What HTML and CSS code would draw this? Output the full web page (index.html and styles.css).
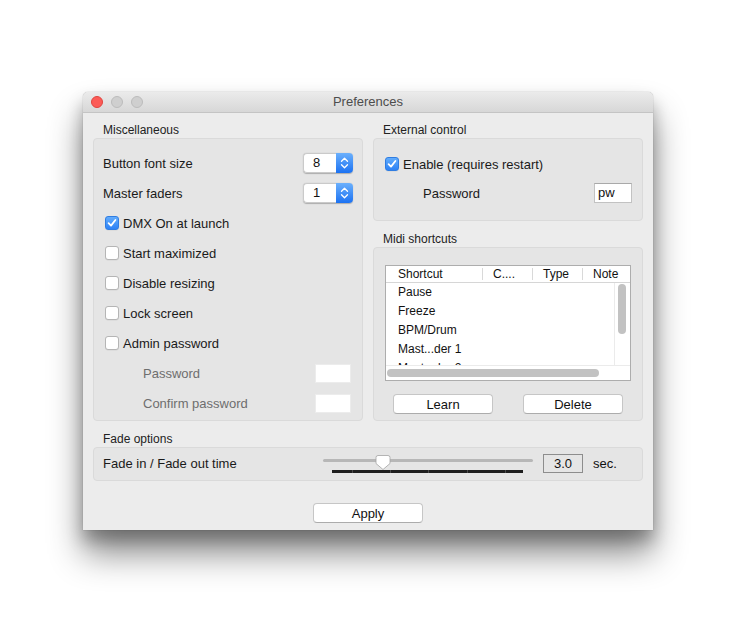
FILE: index.html
```html
<!DOCTYPE html>
<html>
<head>
<meta charset="utf-8">
<title>Preferences</title>
<link rel="stylesheet" href="styles.css">
</head>
<body>
<div class="stage">
  <div class="window">
    <div class="titlebar">
      <div class="lights"><span class="light red"></span><span class="light"></span><span class="light"></span></div>
      <div class="title">Preferences</div>
      <div></div>
    </div>
    <div class="content">
      <div class="columns">
        <div class="col">
          <section class="group">
            <div class="glabel">Miscellaneous</div>
            <div class="gbox misc">
              <div class="row"><span class="lbl">Button font size</span>
                <div class="spin"><span class="val">8</span><span class="arrows"><svg width="17" height="18" viewBox="0 0 17 18"><path d="M5.5 7.2 L8.5 4.2 L11.5 7.2 M5.5 10.8 L8.5 13.8 L11.5 10.8" fill="none" stroke="#fff" stroke-width="1.3" stroke-linecap="round" stroke-linejoin="round"/></svg></span></div>
              </div>
              <div class="row"><span class="lbl">Master faders</span>
                <div class="spin"><span class="val">1</span><span class="arrows"><svg width="17" height="18" viewBox="0 0 17 18"><path d="M5.5 7.2 L8.5 4.2 L11.5 7.2 M5.5 10.8 L8.5 13.8 L11.5 10.8" fill="none" stroke="#fff" stroke-width="1.3" stroke-linecap="round" stroke-linejoin="round"/></svg></span></div>
              </div>
              <div class="row"><span class="cb on"><svg width="12" height="12" viewBox="0 0 12 12"><path d="M2.6 6.2 L5 8.6 L9.4 3" fill="none" stroke="#fff" stroke-width="1.8" stroke-linecap="round" stroke-linejoin="round"/></svg></span><span class="lbl">DMX On at launch</span></div>
              <div class="row"><span class="cb"></span><span class="lbl">Start maximized</span></div>
              <div class="row"><span class="cb"></span><span class="lbl">Disable resizing</span></div>
              <div class="row"><span class="cb"></span><span class="lbl">Lock screen</span></div>
              <div class="row"><span class="cb"></span><span class="lbl">Admin password</span></div>
              <div class="row sub"><span class="lbl">Password</span><span class="field small"></span></div>
              <div class="row sub"><span class="lbl">Confirm password</span><span class="field small"></span></div>
            </div>
          </section>
        </div>
        <div class="col">
          <section class="group">
            <div class="glabel">External control</div>
            <div class="gbox ext">
              <div class="row"><span class="cb on"><svg width="12" height="12" viewBox="0 0 12 12"><path d="M2.6 6.2 L5 8.6 L9.4 3" fill="none" stroke="#fff" stroke-width="1.8" stroke-linecap="round" stroke-linejoin="round"/></svg></span><span class="lbl">Enable (requires restart)</span></div>
              <div class="row sub on"><span class="lbl">Password</span><span class="field pw">pw</span></div>
            </div>
          </section>
          <section class="group gap">
            <div class="glabel">Midi shortcuts</div>
            <div class="gbox midi">
              <div class="table">
                <div class="thead">
                  <span class="th c1">Shortcut</span>
                  <span class="th c2">C....</span>
                  <span class="th c3">Type</span>
                  <span class="th c4">Note</span>
                </div>
                <div class="tbody">
                  <div class="rows">
                    <div class="tr">Pause</div>
                    <div class="tr">Freeze</div>
                    <div class="tr">BPM/Drum</div>
                    <div class="tr">Mast...der 1</div>
                    <div class="tr">Mast...der 2</div>
                  </div>
                  <div class="vscroll"><div class="vthumb"></div></div>
                </div>
                <div class="hscroll"><div class="hthumb"></div></div>
              </div>
              <div class="buttons">
                <button class="btn">Learn</button>
                <button class="btn">Delete</button>
              </div>
            </div>
          </section>
        </div>
      </div>
      <section class="group gap">
        <div class="glabel">Fade options</div>
        <div class="gbox fade">
          <div class="row">
            <span class="flbl">Fade in / Fade out time</span>
            <div class="slider">
              <div class="track"></div>
              <div class="ticks"><span class="t1"></span><span class="t2"></span><span class="t2"></span><span class="t3"></span><span class="t2"></span><span class="t4"></span></div>
              <svg class="thumb" width="16" height="17" viewBox="0 0 16 17"><path d="M3 1.5 H13 A2 2 0 0 1 15 3.5 V9.5 L8 15.5 L1 9.5 V3.5 A2 2 0 0 1 3 1.5 Z" fill="#fff" stroke="#a3a3a3" stroke-width="0.8"/></svg>
            </div>
            <span class="num">3.0</span>
            <span class="unit">sec.</span>
          </div>
        </div>
      </section>
      <div class="footer"><button class="btn apply">Apply</button></div>
    </div>
  </div>
</div>
</body>
</html>
```

FILE: styles.css
```css
* { box-sizing: border-box; }

html, body {
  height: 100%;
}

body {
  margin: 0;
  background: #ffffff;
  font-family: "Liberation Sans", Arial, sans-serif;
  font-size: 13px;
  color: #1a1a1a;
  overflow: hidden;
}

.stage {
  min-height: 624px;
  padding: 92px 0 0 83px;
}

.window {
  width: 570px;
  height: 438px;
  background: #ececec;
  border-radius: 5px 5px 0 0;
  box-shadow: 0 24px 34px rgba(0, 0, 0, 0.45), 0 10px 16px rgba(0, 0, 0, 0.25), 0 0 1px rgba(0, 0, 0, 0.45);
  display: flex;
  flex-direction: column;
}

.titlebar {
  height: 21px;
  display: grid;
  grid-template-columns: 1fr auto 1fr;
  align-items: center;
  background: linear-gradient(#ebebeb, #d7d7d7);
  border-bottom: 1px solid #c4c4c4;
  border-radius: 5px 5px 0 0;
}

.lights {
  display: flex;
  gap: 8px;
  padding-left: 8px;
}

.light {
  width: 12px;
  height: 12px;
  border-radius: 50%;
  background: #cfcfcf;
  border: 1px solid #bcbcbc;
}

.light.red {
  background: #fc5b57;
  border-color: #e0443e;
}

.title {
  color: #4d4d4d;
  font-size: 13px;
  line-height: 20px;
}

.content {
  padding: 9px 10px 0;
  display: flex;
  flex-direction: column;
}

.columns {
  display: flex;
  gap: 10px;
}

.col {
  width: 270px;
  display: flex;
  flex-direction: column;
}

.group.gap {
  margin-top: 10px;
}

.glabel {
  font-size: 12px;
  line-height: 15px;
  height: 16px;
  padding: 1px 0 0 10px;
  color: #222;
}

.gbox {
  background: #e5e5e5;
  border: 1px solid #dadada;
  border-radius: 4px;
}

.row {
  height: 20px;
  display: flex;
  align-items: center;
}

.row .lbl {
  flex: 1;
}

.misc {
  height: 283px;
  padding: 14px 9px 7px;
  display: flex;
  flex-direction: column;
  gap: 10px;
}

.ext {
  height: 83px;
  padding: 15px 10px 17px 9px;
  display: flex;
  flex-direction: column;
  gap: 9px;
}

.row.sub .lbl {
  padding-left: 40px;
  color: #6e6e6e;
}

.row.sub.on .lbl {
  color: #1a1a1a;
}

/* spin box */
.spin {
  width: 50px;
  height: 20px;
  display: flex;
  border-radius: 4px;
  box-shadow: 0 0.5px 1px rgba(0, 0, 0, 0.25);
}

.spin .val {
  flex: 1;
  background: #fff;
  border: 1px solid #cacaca;
  border-right: none;
  border-radius: 4px 0 0 4px;
  padding-left: 9px;
  line-height: 18px;
  font-size: 13px;
  color: #111;
}

.spin .arrows {
  width: 17px;
  border-radius: 0 4px 4px 0;
  background: linear-gradient(#6bb0fc, #1c72f2);
  display: flex;
  align-items: center;
  justify-content: center;
}

/* checkbox */
.cb {
  width: 14px;
  height: 14px;
  flex: none;
  margin: 0 4px 0 2px;
  border-radius: 3px;
  background: #fff;
  border: 1px solid #b5b5b5;
  box-shadow: 0 0.5px 0 rgba(0, 0, 0, 0.08);
  display: flex;
  align-items: center;
  justify-content: center;
}

.cb.on {
  background: linear-gradient(#62acfc, #2d82f6);
  border-color: #2f7de2;
}

/* inputs */
.field {
  background: #fff;
  flex: none;
}

.field.small {
  width: 36px;
  height: 19px;
  margin-right: 2px;
  border: 1px solid #ececec;
}

.field.pw {
  width: 38px;
  height: 20px;
  border: 1px solid #c2c2c2;
  border-top-color: #a9a9a9;
  padding-left: 3px;
  line-height: 18px;
  font-size: 13px;
  color: #111;
}

/* midi */
.midi {
  height: 174px;
  padding: 17px 11px 7px;
}

.table {
  height: 116px;
  border: 1px solid #adadad;
  background: #fff;
  display: flex;
  flex-direction: column;
}

.thead {
  height: 17px;
  flex: none;
  border-bottom: 1px solid #d6d6d6;
  display: flex;
  align-items: center;
  font-size: 12px;
  color: #111;
}

.th {
  height: 12px;
  line-height: 12px;
  white-space: nowrap;
}

.th + .th {
  border-left: 1px solid #d9d9d9;
}

.th.c1 { width: 96px; padding-left: 12px; }
.th.c2 { width: 50px; padding-left: 10px; }
.th.c3 { width: 50px; padding-left: 10px; }
.th.c4 { flex: 1; padding-left: 10px; overflow: hidden; }

.tbody {
  height: 82px;
  flex: none;
  display: flex;
}

.rows {
  flex: 1;
  overflow: hidden;
}

.tr {
  height: 19px;
  line-height: 19px;
  padding-left: 12px;
  font-size: 12px;
  color: #111;
  white-space: nowrap;
}

.vscroll {
  width: 16px;
  flex: none;
  border-left: 1px solid #ebebeb;
  padding-left: 3px;
}

.vthumb {
  width: 8px;
  height: 50px;
  margin-top: 1px;
  border-radius: 4px;
  background: #c2c2c2;
}

.hscroll {
  height: 15px;
  flex: none;
  border-top: 1px solid #ebebeb;
  display: flex;
  align-items: center;
  padding-left: 1px;
}

.hthumb {
  width: 212px;
  height: 8px;
  border-radius: 4px;
  background: #c2c2c2;
}

.buttons {
  margin-top: 13px;
  display: flex;
  justify-content: space-between;
  padding: 0 8px;
}

.btn {
  width: 100px;
  height: 20px;
  padding: 0;
  background: #fff;
  border: 1px solid #c6c6c6;
  border-bottom-color: #acacac;
  border-radius: 4px;
  font-family: "Liberation Sans", Arial, sans-serif;
  font-size: 13px;
  color: #111;
  display: flex;
  align-items: center;
  justify-content: center;
}

/* fade */
.fade {
  height: 34px;
  padding: 5px 10px 7px 9px;
}

.flbl {
  width: 220px;
  flex: none;
}

.slider {
  width: 210px;
  height: 20px;
  flex: none;
  position: relative;
  display: flex;
  flex-direction: column;
}

.track {
  margin-top: 6px;
  height: 3px;
  border-radius: 2px;
  background: #b7b7b7;
}

.ticks {
  margin: 8px 0 0 9px;
  width: 191px;
  height: 3px;
  display: flex;
  gap: 1px;
  background: #4a4a4a;
}

.ticks span { background: #1e1e1e; height: 3px; }
.ticks .t1 { width: 20px; }
.ticks .t2 { width: 37px; }
.ticks .t3 { width: 38px; }
.ticks .t4 { flex: 1; }

.thumb {
  position: absolute;
  left: 52px;
  top: 1px;
}

.num {
  width: 40px;
  height: 19px;
  margin-left: 10px;
  border: 1px solid #8d8d8d;
  text-align: center;
  line-height: 17px;
  color: #111;
  flex: none;
}

.unit {
  margin-left: 10px;
  color: #111;
}

.footer {
  margin-top: 22px;
  display: flex;
  justify-content: center;
}

.btn.apply {
  width: 110px;
}
```
